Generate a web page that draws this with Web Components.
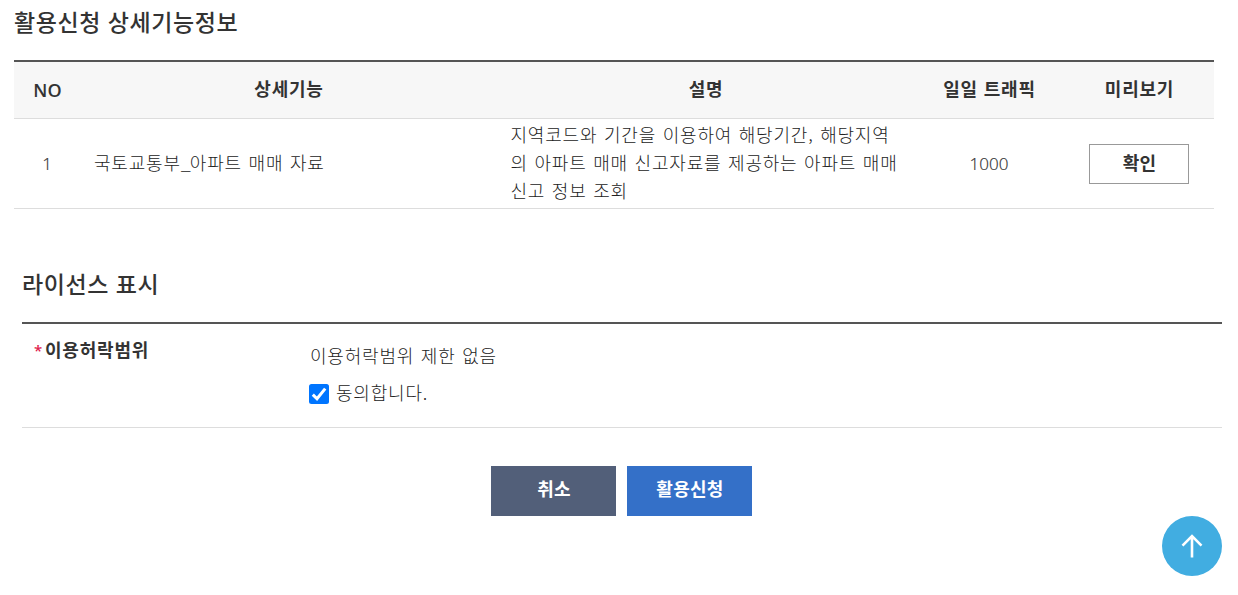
<!DOCTYPE html>
<html lang="ko">
<head>
<meta charset="utf-8">
<title>활용신청</title>
<style>
  body {
    margin: 0;
    height: 595px;
    overflow: hidden;
    background: #fff;
    color: #333;
    font-family: "Noto Sans CJK KR", sans-serif;
    font-size: 18px;
    font-weight: 300;
    line-height: 28px;
    letter-spacing: 0.8px;
    word-spacing: 0.8px;
  }
</style>
</head>
<body>
<apply-page></apply-page>

<script>
// Section with a title and a dark rule under it
class InfoSection extends HTMLElement {
  constructor() {
    super();
    this.attachShadow({ mode: 'open' });
  }

  connectedCallback() {
    this.shadowRoot.innerHTML = `
      <style>
        :host { display: block; width: 1200px; }
        h2 {
          margin: 0 0 21px;
          font-size: 23px;
          font-weight: 500;
          line-height: 36px;
          letter-spacing: 0.55px;
          word-spacing: 0;
        }
        .body { border-top: 2px solid #555; }
      </style>
      <h2>${this.getAttribute('heading')}</h2>
      <div class="body"><slot></slot></div>
    `;
  }
}
customElements.define('info-section', InfoSection);

// Button: line, gray or blue
class PageButton extends HTMLElement {
  constructor() {
    super();
    this.attachShadow({ mode: 'open' });
    this.shadowRoot.innerHTML = `
      <style>
        :host { display: block; }
        button {
          display: block;
          box-sizing: border-box;
          width: 125px;
          height: 50px;
          padding: 0 0 6px 1px;
          border: 0;
          background: #525f79;
          color: #fff;
          font: inherit;
          font-weight: 700;
          letter-spacing: 0.3px;
          cursor: pointer;
        }
        :host([kind="blue"]) button { background: #3470c8; }
        :host([kind="line"]) button {
          width: 100px;
          height: 40px;
          padding-bottom: 3px;
          border: 1px solid #999;
          background: #fff;
          color: #333;
        }
      </style>
      <button type="button"><slot></slot></button>
    `;
  }
}
customElements.define('page-button', PageButton);

// Table of the requested functions
class FunctionTable extends HTMLElement {
  constructor() {
    super();
    this.attachShadow({ mode: 'open' });
  }

  connectedCallback() {
    this.shadowRoot.innerHTML = `
      <style>
        :host { display: block; }
        .row {
          display: grid;
          grid-template-columns: 66px 417px 417px 150px 150px;
          align-items: center;
          justify-items: center;
          height: 89px;
          border-bottom: 1px solid #ddd;
        }
        .head {
          height: 56px;
          background: #f7f7f7;
          font-weight: 700;
          word-spacing: 0;
        }
        .head span { padding: 0 0 4px 1px; }
        .left {
          justify-self: stretch;
          box-sizing: border-box;
          padding: 0 14px;
        }
        .name, .desc { color: #222; }
        .name { padding-bottom: 3px; }
        .name i { font-style: normal; letter-spacing: -1px; }
        .desc { padding: 0 0 3px 13.5px; white-space: nowrap; }
        .num {
          padding-top: 1px;
          font-family: "Open Sans", "Noto Sans", sans-serif;
          font-size: 17px;
          letter-spacing: 0;
          -webkit-text-stroke: 0.2px #333;
        }
        .head .no {
          padding: 0 0 1px 1px;
          font-family: "Open Sans", "Noto Sans", sans-serif;
          font-weight: 600;
          letter-spacing: 0;
        }
      </style>
      <div class="row head">
        <span class="no">NO</span>
        <span>상세기능</span>
        <span>설명</span>
        <span>일일 트래픽</span>
        <span>미리보기</span>
      </div>
      <div class="row">
        <span class="num">1</span>
        <span class="left name">국토교통부<i>_</i>아파트 매매 자료</span>
        <span class="left desc">지역코드와 기간을 이용하여 해당기간, 해당지역<br>의 아파트 매매 신고자료를 제공하는 아파트 매매<br>신고 정보 조회</span>
        <span class="num">1000</span>
        <page-button kind="line">확인</page-button>
      </div>
    `;
  }
}
customElements.define('function-table', FunctionTable);

// License scope with the agreement checkbox
class LicenseForm extends HTMLElement {
  constructor() {
    super();
    this.attachShadow({ mode: 'open' });
  }

  connectedCallback() {
    this.shadowRoot.innerHTML = `
      <style>
        :host {
          display: flex;
          height: 103px;
          border-bottom: 1px solid #ddd;
        }
        .label {
          display: flex;
          box-sizing: border-box;
          width: 287px;
          padding: 11px 0 0 12px;
          font-weight: 700;
        }
        .star {
          width: 11px;
          color: #e0224e;
          font-family: "Open Sans", sans-serif;
          font-size: 15px;
          font-weight: 600;
          letter-spacing: 0;
          padding-top: 1px;
        }
        .scope { padding-top: 17px; color: #222; }
        .text { padding-left: 1px; }
        label {
          display: flex;
          align-items: center;
          gap: 7px;
          margin-top: 9px;
        }
        input { display: none; }
        svg { display: block; margin-top: 4px; }
        input:not(:checked) + svg path { display: none; }
      </style>
      <div class="label"><span class="star">*</span><span>이용허락범위</span></div>
      <div class="scope">
        <div class="text">이용허락범위 제한 없음</div>
        <label>
          <input type="checkbox" checked>
          <svg width="20" height="20" viewBox="0 0 20 20">
            <rect width="20" height="20" rx="2.5" fill="#0075ff"/>
            <path d="M3.8 10.6 L8 14.8 L16.2 4.6" fill="none" stroke="#fff" stroke-width="3"/>
          </svg>
          <span>동의합니다.</span>
        </label>
      </div>
    `;
  }
}
customElements.define('license-form', LicenseForm);

// Round button that goes back to the top
class TopButton extends HTMLElement {
  constructor() {
    super();
    this.attachShadow({ mode: 'open' });
    this.shadowRoot.innerHTML = `
      <style>
        :host {
          position: fixed;
          right: 16px;
          bottom: 19px;
        }
        svg { display: block; cursor: pointer; }
      </style>
      <svg width="60" height="60" viewBox="0 0 60 60">
        <circle cx="30" cy="30" r="30" fill="#41ade1"/>
        <path d="M30 41.5 V20 M20.5 29.7 L30 20.2 L39.5 29.7" fill="none" stroke="#fff" stroke-width="2.6"/>
      </svg>
    `;
    this.addEventListener('click', () => window.scrollTo(0, 0));
  }
}
customElements.define('top-button', TopButton);

// Whole page
class ApplyPage extends HTMLElement {
  constructor() {
    super();
    this.attachShadow({ mode: 'open' });
  }

  connectedCallback() {
    this.shadowRoot.innerHTML = `
      <style>
        :host { display: block; padding: 3px 0 0 14px; }
        .license { margin: 56px 0 0 8px; }
        .buttons {
          display: flex;
          gap: 11px;
          margin: 38px 0 0 477px;
        }
      </style>
      <info-section heading="활용신청 상세기능정보">
        <function-table></function-table>
      </info-section>
      <info-section class="license" heading="라이선스 표시">
        <license-form></license-form>
      </info-section>
      <div class="buttons">
        <page-button>취소</page-button>
        <page-button kind="blue">활용신청</page-button>
      </div>
      <top-button></top-button>
    `;
  }
}
customElements.define('apply-page', ApplyPage);
</script>
</body>
</html>
